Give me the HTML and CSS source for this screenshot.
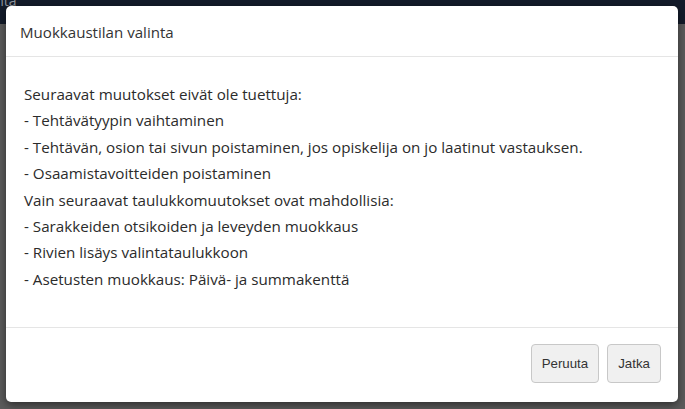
FILE: index.html
```html
<!DOCTYPE html>
<html lang="fi">
<head>
<meta charset="utf-8">
<title>Muokkaustilan valinta</title>
<link rel="stylesheet" href="styles.css">
</head>
<body>
<div class="page">
  <div class="navbar"><span class="nav-text">Muokkaustilan valinta</span></div>
  <div class="backdrop"></div>
</div>
<div class="modal">
  <div class="modal-header">
    <h4 class="modal-title">Muokkaustilan valinta</h4>
  </div>
  <div class="modal-body">
    <div class="line">Seuraavat muutokset eivät ole tuettuja:</div>
    <div class="line">- Tehtävätyypin vaihtaminen</div>
    <div class="line">- Tehtävän, osion tai sivun poistaminen, jos opiskelija on jo laatinut vastauksen.</div>
    <div class="line">- Osaamistavoitteiden poistaminen</div>
    <div class="line">Vain seuraavat taulukkomuutokset ovat mahdollisia:</div>
    <div class="line">- Sarakkeiden otsikoiden ja leveyden muokkaus</div>
    <div class="line">- Rivien lisäys valintataulukkoon</div>
    <div class="line">- Asetusten muokkaus: Päivä- ja summakenttä</div>
  </div>
  <div class="modal-footer">
    <button class="btn" type="button">Peruuta</button>
    <button class="btn" type="button">Jatka</button>
  </div>
</div>
</body>
</html>
```

FILE: styles.css
```css
html, body {
  margin: 0;
  padding: 0;
  width: 685px;
  height: 409px;
  overflow: hidden;
  background: #5b5b5b;
}

.page {
  display: flex;
  flex-direction: column;
  height: 409px;
}

.navbar {
  height: 24px;
  background: #131b2a;
  overflow: hidden;
  flex: none;
}

.nav-text {
  display: block;
  margin-left: -126px;
  margin-top: -7px;
  font-family: "Open Sans", "Noto Sans", sans-serif;
  font-size: 14px;
  color: #8e939c;
  line-height: 16px;
}

.backdrop {
  flex: 1;
  background: #5b5b5b;
}

.modal {
  position: absolute;
  left: 6px;
  top: 6px;
  width: 672px;
  height: 396px;
  background: #fff;
  border-radius: 5px;
  box-shadow: 0 3px 9px rgba(0, 0, 0, 0.5);
  display: flex;
  flex-direction: column;
  font-family: "Open Sans", "Noto Sans", sans-serif;
  color: #333;
}

.modal-header {
  height: 50px;
  border-bottom: 1px solid #e5e5e5;
  padding: 1px 14px 0;
  box-sizing: border-box;
  height: 51px;
  display: flex;
  align-items: center;
  flex: none;
}

.modal-title {
  margin: 0;
  font-size: 15.1px;
  font-weight: normal;
  color: #333;
}

.modal-body {
  flex: 1;
  padding: 24px 18px 0;
  font-size: 15.2px;
  line-height: 26.4px;
  color: #2b2b2b;
}

.modal-footer {
  height: 75px;
  border-top: 1px solid #e5e5e5;
  display: flex;
  justify-content: flex-end;
  align-items: flex-start;
  gap: 8px;
  padding: 16px 17px 0 0;
  box-sizing: border-box;
  flex: none;
}

.btn {
  height: 39px;
  padding: 0 10px;
  background: #f0f0f0;
  border: 1px solid #c8c8c8;
  border-radius: 4px;
  font-family: "Liberation Sans", Arial, sans-serif;
  font-size: 13.3px;
  color: #333;
}
```
